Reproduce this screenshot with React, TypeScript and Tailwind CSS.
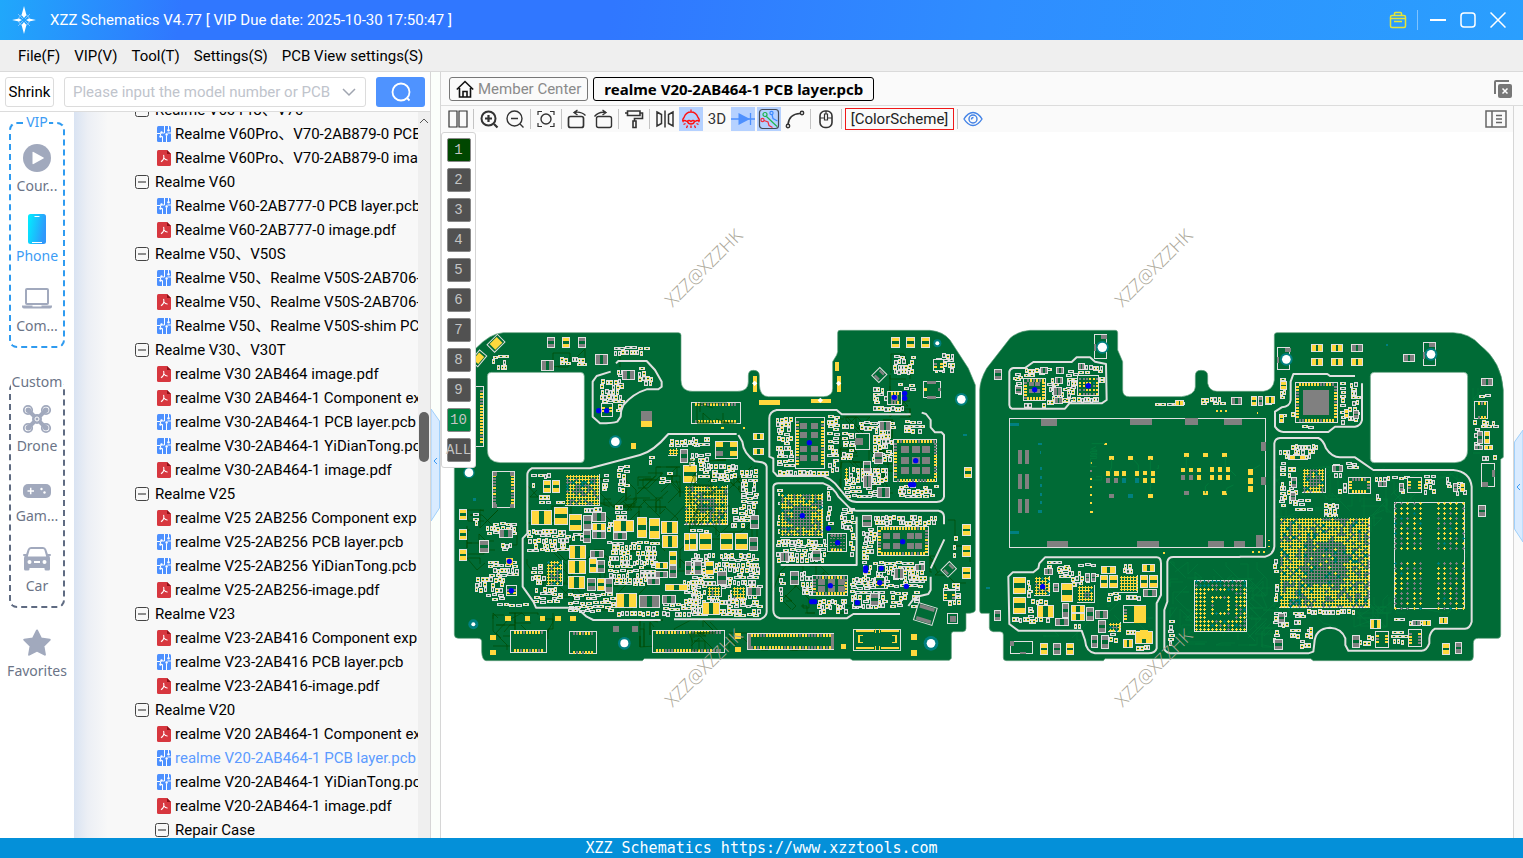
import type { ReactNode } from "react";
import clsx from "clsx";

type Box = [number, number, number, number];
type Part = [number, number, number, number, "h" | "v", "y" | "g"];

const BOARD = "#006b36";
const YELLOW = "#ffd83d";
const GRAY = "#808080";
const TEAL = "#008080";
const SILK = "#e0e0e0";
const DARK = "#004a00";

/* ---------- board drawing ---------- */

const random = (seed: number) => {
  let s = seed * 9301 + 49297;
  return () => {
    s = (s * 1664525 + 1013904223) % 4294967296;
    return s / 4294967296;
  };
};

// the board uses 3 units for one screen pixel, so everything snaps to 3
const snap = (v: number) => Math.round(v / 3) * 3;
const rect = (x: number, y: number, w: number, h: number) =>
  `M${snap(x)} ${snap(y)}h${snap(w)}v${snap(h)}h${-snap(w)}z`;

interface Ink {
  silk: string[];
  board: string[];
  yellow: string[];
  gray: string[];
  teal: string[];
}

const newInk = (): Ink => ({ silk: [], board: [], yellow: [], gray: [], teal: [] });

const drawPart = (ink: Ink, [x, y, w, h, dir, color]: Part) => {
  ink.silk.push(rect(x, y, w, h));
  const iw = snap(w) - 6;
  const ih = snap(h) - 6;
  const sx = snap(x) + 3;
  const sy = snap(y) + 3;
  ink.board.push(rect(sx, sy, iw, ih));
  const list = color === "y" ? ink.yellow : ink.gray;
  if (dir === "h") {
    const p = Math.max(3, snap(iw * 0.36));
    list.push(rect(sx, sy, p, ih), rect(sx + iw - p, sy, p, ih));
  } else {
    const p = Math.max(3, snap(ih * 0.36));
    list.push(rect(sx, sy, iw, p), rect(sx, sy + ih - p, iw, p));
  }
};

const fillArea = (ink: Ink, [x, y, w, h]: Box, seed: number) => {
  const rnd = random(seed);
  let cy = y;
  while (cy + 9 <= y + h + 3) {
    const tall = rnd() > 0.5;
    const rowH = tall ? 15 : 12;
    let cx = x + snap(rnd() * 6);
    while (cx + 9 <= x + w + 3) {
      const pw = tall ? 9 + snap(rnd() * 3) : 15 + snap(rnd() * 4);
      if (rnd() > 0.14) {
        const color = rnd() > 0.35 ? "y" : "g";
        drawPart(ink, [cx, cy + snap(rnd() * 3), pw, rowH - (tall ? 0 : 3), tall ? "v" : "h", color]);
      }
      cx += pw + (rnd() > 0.6 ? 3 : 0);
    }
    cy += rowH;
  }
};

const drawBalls = (ink: Ink, [x, y, w, h]: Box, pitch: number, grayShare: number, seed: number) => {
  const rnd = random(seed);
  const midX = x + w / 2;
  const midY = y + h / 2;
  for (let cy = y + 6; cy < y + h - 3; cy += pitch) {
    for (let cx = x + 6; cx < x + w - 3; cx += pitch) {
      const near = Math.abs(cx - midX) < w * 0.22 && Math.abs(cy - midY) < h * 0.22;
      const r = rnd();
      let list = ink.yellow;
      if (near ? r < grayShare + 0.35 : r < grayShare * 0.6) list = ink.gray;
      else if (r > 0.94) list = ink.teal;
      list.push(rect(cx - 3, cy, 9, 3), rect(cx, cy - 3, 3, 9));
    }
  }
};

// package with pins on its edges: t(op) b(ottom) l(eft) r(ight)
const drawPins = (ink: Ink, [x, y, w, h]: Box, sides: string, seed: number) => {
  const rnd = random(seed);
  ink.silk.push(rect(x, y, w, h));
  ink.board.push(rect(snap(x) + 3, snap(y) + 3, snap(w) - 6, snap(h) - 6));
  const pick = () => (rnd() > 0.3 ? ink.yellow : ink.gray);
  for (let px = x + 12; px < x + w - 12; px += 9) {
    if (sides.includes("t")) pick().push(rect(px, y + 3, 6, 9));
    if (sides.includes("b")) pick().push(rect(px, y + h - 12, 6, 9));
  }
  for (let py = y + 12; py < y + h - 12; py += 9) {
    if (sides.includes("l")) pick().push(rect(x + 3, py, 9, 6));
    if (sides.includes("r")) pick().push(rect(x + w - 12, py, 9, 6));
  }
};

const drawPads = (ink: Ink, [x, y, w, h]: Box, cols: number, rows: number, size: number) => {
  for (let r = 0; r < rows; r++) {
    for (let c = 0; c < cols; c++) {
      const px = x + (w * (c + 0.5)) / cols - size / 2;
      const py = y + (h * (r + 0.5)) / rows - size / 2;
      ink.gray.push(rect(px, py, size, size - 3));
    }
  }
};

const wander = ([x, y, w, h]: Box, count: number, seed: number) => {
  const rnd = random(seed);
  const out: string[] = [];
  for (let i = 0; i < count; i++) {
    let cx = x + rnd() * w;
    let cy = y + rnd() * h;
    let d = `M${snap(cx)} ${snap(cy)}`;
    for (let k = 0; k < 4; k++) {
      const step = 12 + rnd() * 45;
      const turn = Math.floor(rnd() * 3);
      const dx = (rnd() > 0.5 ? 1 : -1) * (turn === 1 ? 0 : step);
      const dy = (rnd() > 0.5 ? 1 : -1) * (turn === 0 ? 0 : step);
      cx = Math.min(x + w, Math.max(x, cx + dx));
      cy = Math.min(y + h, Math.max(y, cy + dy));
      d += `L${snap(cx)} ${snap(cy)}`;
    }
    out.push(d);
  }
  return out.join("");
};

const InkLayer = ({ ink }: { ink: Ink }) => (
  <g shapeRendering="crispEdges">
    <path d={ink.silk.join("")} fill={SILK} />
    <path d={ink.board.join("")} fill={BOARD} />
    <path d={ink.yellow.join("")} fill={YELLOW} />
    <path d={ink.gray.join("")} fill={GRAY} />
    <path d={ink.teal.join("")} fill={TEAL} />
  </g>
);

interface Section {
  offset: number;
  areas: Box[];
  parts: Part[];
  balls: [Box, number, number][];
  pins: [Box, string][];
  pads: [Box, number, number, number][];
  yellow: Box[];
  gray: Box[];
  teal: Box[];
  silk: string;
  blue: [number, number][];
  holes: [number, number, number, number][];
  traces: [Box, number][];
  traceColor: string;
}

const sections: Section[] = [
  {
    offset: 0,
    areas: [
      [275, 105, 42, 36], [480, 110, 80, 26], [636, 78, 104, 30], [600, 176, 66, 74], [650, 148, 24, 50],
      [712, 140, 45, 60], [642, 250, 20, 30], [392, 462, 36, 40], [430, 460, 50, 15], [414, 526, 40, 30],
      [462, 542, 90, 16], [550, 562, 60, 12], [220, 580, 16, 60], [255, 605, 100, 40], [300, 670, 40, 22],
      [265, 720, 90, 46], [222, 770, 90, 50], [255, 820, 60, 24], [290, 848, 85, 16], [380, 626, 120, 70],
      [390, 730, 42, 60], [400, 800, 90, 54], [516, 636, 34, 34], [620, 664, 150, 104], [640, 770, 100, 26],
      [500, 820, 148, 60], [652, 874, 130, 12], [606, 462, 16, 45], [650, 436, 30, 80], [644, 556, 30, 44],
      [776, 456, 36, 30], [806, 356, 90, 30], [868, 396, 30, 40], [786, 850, 110, 36], [848, 780, 50, 64],
      [740, 406, 20, 24], [620, 606, 20, 24],
    ],
    parts: [
      [441, 52, 24, 34, "v", "g"], [487, 52, 24, 34, "v", "y"], [533, 52, 24, 34, "v", "g"],
      [424, 120, 38, 32, "h", "g"], [585, 102, 38, 32, "h", "g"], [667, 150, 40, 30, "h", "g"],
      [178, 568, 24, 34, "v", "y"], [178, 628, 24, 34, "v", "y"], [178, 688, 24, 36, "v", "y"],
      [236, 660, 30, 38, "v", "g"], [430, 480, 24, 40, "v", "y"], [455, 480, 24, 40, "v", "y"],
      [394, 570, 64, 44, "h", "y"], [462, 560, 42, 54, "v", "y"], [506, 582, 39, 51, "v", "y"],
      [548, 585, 26, 44, "v", "g"], [575, 576, 42, 30, "h", "g"], [575, 608, 42, 24, "h", "y"],
      [640, 600, 62, 36, "h", "y"], [710, 590, 30, 64, "v", "y"], [746, 594, 33, 64, "v", "y"],
      [782, 602, 51, 40, "h", "y"], [785, 646, 48, 38, "h", "y"], [506, 676, 52, 42, "h", "y"],
      [504, 720, 54, 42, "h", "y"], [504, 768, 52, 38, "h", "y"], [560, 774, 26, 40, "v", "g"],
      [590, 774, 24, 40, "v", "y"], [616, 774, 24, 44, "v", "g"], [648, 820, 64, 44, "h", "y"],
      [718, 824, 62, 38, "h", "g"], [785, 824, 42, 26, "h", "g"], [853, 638, 42, 54, "v", "y"],
      [848, 434, 42, 54, "v", "y"], [855, 722, 22, 42, "v", "g"], [880, 722, 22, 42, "v", "g"],
      [570, 690, 42, 24, "h", "g"], [568, 715, 24, 44, "v", "y"], [592, 720, 24, 38, "v", "g"],
      [740, 775, 38, 22, "h", "g"], [765, 725, 40, 22, "h", "y"], [766, 752, 40, 20, "h", "g"],
      [795, 793, 70, 20, "h", "y"], [808, 692, 24, 42, "v", "y"], [808, 736, 24, 40, "v", "g"],
      [296, 628, 42, 26, "h", "g"], [840, 388, 24, 42, "v", "g"], [640, 637, 42, 24, "h", "g"],
      [575, 634, 42, 24, "h", "g"], [550, 630, 24, 40, "v", "g"],
    ],
    balls: [
      [[496, 462, 104, 95], 9, 0.3],
      [[438, 720, 50, 78], 9, 0.3],
      [[852, 495, 133, 120], 9, 0.35],
      [[804, 384, 28, 24], 9, 0.2],
    ],
    pins: [
      [[276, 454, 68, 112], "lr"], [[331, 930, 112, 68], "tb"], [[508, 934, 84, 70], "tb"],
      [[757, 930, 220, 68], "tb"], [[873, 247, 150, 66], "tb"], [[224, 198, 28, 182], "r"],
      [[602, 250, 36, 42], "lr"], [[318, 796, 34, 34], "lr"],
    ],
    pads: [[[722, 277, 36, 22], 1, 1, 33]],
    yellow: [
      [724, 293, 33, 26], [693, 369, 15, 18], [315, 888, 18, 15], [375, 888, 15, 15], [420, 888, 15, 15],
      [466, 888, 18, 15], [510, 888, 18, 15], [270, 945, 18, 15], [270, 990, 18, 15], [318, 714, 21, 21],
    ],
    gray: [[639, 918, 18, 18], [697, 918, 18, 18], [278, 456, 12, 12], [330, 456, 12, 12], [278, 552, 12, 12], [330, 552, 12, 12]],
    teal: [[218, 535, 9, 9]],
    silk:
      "M648 130L655 123H740L765 150L785 185V200L775 208H740Q700 220 670 255Q662 270 662 290L652 305Q640 310 600 310L578 290V185L590 168L632 155" +
      "M1010 342H805Q760 395 720 405L570 445H395Q382 452 382 465V640L368 655V800L400 845L408 863H530L560 890L580 900H782" +
      "M822 898H1080Q1100 890 1100 875V440Q1098 428 1080 426L1065 424Q1030 400 1027 365L1015 345",
    blue: [[596, 272], [620, 272], [328, 724], [334, 812]],
    holes: [[646, 365, 13, 19], [207, 458, 13, 17], [673, 970, 12, 19], [220, 913, 6, 15]],
    traces: [[[600, 440, 240, 120], 18], [[380, 470, 500, 400], 40], [[280, 880, 180, 110], 10], [[720, 900, 250, 80], 10], [[200, 570, 150, 180], 8], [[460, 60, 200, 80], 3]],
    traceColor: DARK,
  },
  {
    offset: 870,
    areas: [
      [258, 290, 50, 150], [408, 286, 36, 170], [452, 310, 40, 110], [490, 304, 60, 26], [545, 304, 62, 120],
      [462, 440, 130, 92], [622, 496, 118, 36], [258, 656, 150, 62], [408, 500, 20, 110], [450, 560, 40, 60],
      [476, 620, 15, 90], [260, 505, 10, 140], [516, 586, 230, 28], [512, 620, 44, 92], [515, 722, 190, 86],
      [382, 836, 90, 40], [266, 760, 14, 84], [480, 770, 110, 90], [545, 200, 44, 60], [610, 106, 60, 48],
      [735, 98, 60, 60], [620, 188, 50, 22], [150, 446, 52, 128], [0, 352, 66, 24], [20, 400, 36, 80],
      [60, 432, 82, 50], [122, 560, 50, 60], [0, 700, 210, 186], [576, 258, 80, 10], [596, 812, 90, 54],
      [760, 790, 50, 66], [640, 300, 62, 44], [262, 450, 172, 9], [330, 752, 40, 74], [200, 296, 22, 12],
      [790, 646, 10, 70], [0, 628, 70, 9],
    ],
    parts: [
      [603, 52, 26, 34, "v", "y"], [648, 52, 26, 34, "v", "y"], [694, 52, 26, 34, "v", "y"],
      [189, 340, 34, 22, "h", "y"], [189, 385, 34, 22, "h", "y"], [822, 442, 24, 34, "v", "y"],
      [816, 612, 26, 36, "v", "y"], [816, 676, 26, 36, "v", "y"], [816, 740, 26, 36, "v", "y"],
      [300, 752, 26, 42, "v", "g"], [-2, 640, 24, 50, "v", "y"], [26, 640, 38, 52, "v", "y"],
      [90, 640, 38, 52, "v", "y"], [134, 640, 38, 52, "v", "y"], [178, 652, 26, 42, "v", "g"],
      [180, 585, 26, 42, "v", "g"], [45, 724, 26, 42, "v", "y"], [12, 724, 24, 42, "v", "g"],
      [82, 752, 30, 42, "v", "g"], [172, 802, 42, 26, "h", "g"], [36, 846, 54, 40, "h", "y"],
      [540, 820, 28, 40, "v", "g"], [566, 304, 36, 30, "h", "g"], [518, 424, 24, 34, "v", "g"],
      [552, 396, 28, 36, "v", "g"], [520, 466, 28, 38, "h", "g"], [562, 500, 40, 32, "h", "g"],
      [612, 744, 30, 32, "h", "g"], [270, 696, 28, 30, "h", "g"], [366, 690, 28, 32, "v", "g"],
      [516, 586, 30, 36, "v", "g"], [676, 732, 30, 22, "h", "g"],
    ],
    balls: [
      [[270, 518, 130, 134], 9, 0.6], [[52, 797, 45, 34], 9, 0.1], [[125, 797, 45, 40], 9, 0.1],
      [[462, 440, 18, 40], 9, 0.1],
    ],
    pins: [
      [[314, 290, 90, 155], "lr"], [[610, 358, 133, 130], "tblr"], [[560, 618, 156, 90], "tblr"],
      [[367, 765, 108, 62], "tblr"], [[592, 212, 44, 42], "tb"], [[412, 638, 60, 58], "tb"],
      [[172, 940, 262, 50], "tb"], [[490, 926, 144, 66], ""], [[700, 184, 54, 52], ""],
      [[772, 880, 34, 34], ""], [[728, 118, 33, 36], "lr"], [[758, 810, 40, 34], "lr"],
      [[554, 770, 30, 36], "lr"], [[562, 734, 26, 24], "lr"], [[490, 836, 26, 24], "lr"],
      [[495, 340, 44, 50], ""], [[76, 363, 68, 54], ""],
    ],
    pads: [
      [[322, 304, 68, 56], 2, 2, 21], [[322, 376, 68, 54], 2, 2, 21], [[630, 376, 94, 92], 3, 3, 24],
      [[576, 634, 56, 60], 2, 2, 21], [[648, 634, 50, 60], 2, 2, 21], [[378, 776, 90, 42], 3, 2, 21],
      [[602, 222, 24, 24], 1, 1, 21], [[496, 352, 24, 30], 1, 1, 24],
      [[418, 644, 50, 48], 5, 5, 6],
    ],
    yellow: [
      [190, 168, 12, 48], [207, 240, 63, 15], [363, 237, 60, 12], [441, 168, 12, 48], [435, 126, 12, 27],
      [135, 939, 18, 18], [135, 981, 18, 15], [663, 942, 18, 18], [663, 990, 18, 18], [453, 972, 15, 15],
      [498, 930, 55, 6], [573, 930, 55, 6], [498, 981, 55, 6], [573, 981, 55, 6], [504, 945, 6, 24],
      [614, 945, 6, 24], [701, 204, 9, 9], [94, 320, 9, 6], [160, 320, 6, 6], [504, 945, 15, 3],
      [504, 966, 15, 3], [606, 945, 15, 3], [606, 966, 15, 3], [555, 927, 3, 12], [567, 927, 3, 12],
      [555, 978, 3, 12], [567, 978, 3, 12], [79, 366, 21, 15], [120, 366, 21, 15], [120, 393, 21, 15],
    ],
    gray: [
      [712, 184, 28, 9], [712, 227, 28, 9], [744, 205, 9, 9], [780, 888, 18, 18], [174, 942, 9, 45],
      [423, 942, 9, 45], [79, 393, 21, 15],
    ],
    teal: [[819, 343, 12, 5], [888, 802, 12, 6]],
    silk:
      "M662 283H455L440 270H260Q238 275 238 295V410L250 415V455L262 468H400Q420 475 435 490L475 538Q485 546 500 546H740Q760 545 762 530V345L755 337H735L722 322V300L708 282L695 278" +
      "M500 590V735H272M630 882H490L470 895H270Q250 890 250 870V500Q252 490 265 490H400Q430 500 445 530L480 565Q490 572 500 572H745Q762 575 762 590V613" +
      "M763 658L722 745M722 770V810L715 822L690 828L672 835L655 858",
    blue: [
      [358, 368], [677, 422], [337, 587], [415, 625], [443, 668], [638, 665], [613, 232], [644, 220], [644, 235],
      [662, 494], [671, 494], [574, 745], [527, 744], [527, 752], [569, 788], [649, 799], [421, 797], [365, 845], [374, 845], [502, 848],
    ],
    holes: [[742, 70, 6, 12], [814, 238, 13, 19], [723, 970, 13, 22]],
    traces: [[[0, 420, 200, 240], 24], [[250, 640, 240, 240], 12], [[450, 290, 160, 230], 24], [[0, 940, 400, 50], 10], [[20, 250, 120, 60], 6], [[600, 90, 60, 200], 5], [[720, 600, 120, 200], 5]],
    traceColor: DARK,
  },
  {
    offset: 1710,
    areas: [
      [130, 156, 26, 18], [162, 144, 44, 24], [208, 144, 40, 22], [232, 172, 26, 76], [255, 204, 50, 44],
      [288, 148, 30, 80], [322, 136, 76, 24], [388, 168, 10, 60], [262, 232, 128, 9], [160, 246, 70, 9],
      [540, 246, 110, 9], [690, 230, 70, 24], [228, 724, 74, 18], [262, 738, 42, 44], [300, 752, 36, 36],
      [322, 728, 56, 12], [455, 730, 50, 22], [344, 760, 30, 28], [172, 776, 12, 60], [178, 838, 54, 16],
      [170, 858, 26, 44], [126, 892, 112, 20], [412, 816, 28, 30], [440, 826, 74, 12], [456, 926, 40, 20],
      [418, 940, 26, 36], [494, 974, 50, 12], [594, 862, 9, 110], [132, 172, 20, 45], [312, 908, 18, 9],
    ],
    parts: [
      [73, 148, 25, 34, "v", "g"], [128, 772, 40, 52, "v", "y"], [128, 830, 40, 52, "v", "y"],
      [274, 790, 36, 56, "v", "y"], [202, 856, 50, 40, "h", "y"], [392, 738, 44, 24, "h", "y"],
      [390, 766, 24, 40, "v", "y"], [416, 766, 28, 40, "v", "y"], [516, 733, 40, 25, "h", "y"],
      [510, 764, 24, 40, "v", "y"], [537, 764, 26, 40, "v", "y"], [518, 808, 42, 24, "h", "g"],
      [277, 848, 22, 46, "v", "g"], [303, 855, 42, 24, "h", "y"], [303, 880, 42, 25, "h", "y"],
      [348, 862, 24, 42, "v", "g"], [376, 870, 40, 26, "h", "g"], [384, 900, 25, 40, "v", "g"],
      [364, 946, 22, 40, "v", "g"], [392, 946, 25, 42, "v", "g"], [256, 893, 42, 24, "h", "g"],
      [496, 932, 54, 40, "h", "y"], [460, 958, 30, 28, "h", "y"], [210, 968, 25, 36, "v", "y"],
      [249, 968, 25, 36, "v", "g"], [289, 968, 25, 36, "v", "y"], [73, 870, 22, 34, "v", "g"],
      [782, 230, 34, 24, "h", "g"], [843, 228, 17, 30, "v", "y"], [863, 228, 15, 30, "v", "g"],
      [886, 228, 22, 28, "v", "y"], [616, 240, 26, 18, "h", "y"], [134, 198, 20, 24, "v", "g"],
      [210, 142, 25, 22, "h", "g"], [259, 140, 25, 22, "h", "g"], [325, 130, 22, 22, "h", "g"],
      [255, 170, 25, 22, "h", "g"], [250, 200, 26, 26, "h", "g"], [252, 232, 26, 20, "h", "g"],
      [250, 788, 18, 26, "v", "g"], [222, 744, 26, 20, "h", "g"], [346, 758, 16, 28, "v", "g"],
      [364, 758, 14, 28, "v", "g"],
    ],
    balls: [
      [[320, 795, 54, 54], 9, 0], [[447, 766, 58, 54], 9, 0], [[415, 905, 38, 30], 9, 0.1], [[193, 768, 47, 60], 9, 0.2],
    ],
    pins: [
      [[118, 295, 772, 390], ""], [[158, 174, 70, 70], "tblr"], [[322, 165, 66, 62], ""], [[460, 856, 70, 55], "l"],
      [[373, 42, 40, 74], ""], [[120, 964, 70, 40], ""], [[673, 780, 160, 155], ""],
    ],
    pads: [[[174, 184, 38, 42], 2, 2, 15]],
    yellow: [
      [491, 858, 36, 51], [511, 930, 24, 27], [402, 369, 9, 6], [417, 408, 15, 12], [474, 408, 15, 12], [534, 408, 15, 12],
      [408, 453, 12, 15], [432, 453, 15, 15], [456, 453, 12, 15], [495, 453, 12, 15], [519, 453, 12, 12],
      [543, 453, 12, 15], [519, 474, 12, 15], [543, 474, 12, 15], [534, 522, 15, 12], [642, 399, 15, 12],
      [699, 399, 15, 12], [756, 399, 15, 12], [633, 444, 12, 12], [657, 444, 12, 12], [681, 444, 12, 12],
      [720, 441, 12, 15], [744, 441, 12, 15], [768, 441, 12, 15], [681, 465, 12, 15], [720, 465, 12, 15],
      [744, 465, 12, 15], [768, 465, 12, 15], [699, 513, 15, 12], [756, 513, 15, 12], [834, 447, 15, 18],
      [834, 474, 15, 18], [834, 498, 15, 18], [360, 426, 6, 6], [360, 474, 6, 6], [360, 498, 6, 6], [360, 522, 6, 6],
      [360, 546, 6, 6], [360, 573, 9, 6], [738, 270, 6, 6], [750, 270, 6, 6], [765, 270, 6, 6], [861, 276, 3, 6],
      [846, 693, 6, 6], [864, 693, 6, 6], [879, 693, 6, 6], [579, 696, 6, 6], [894, 660, 6, 3], [894, 678, 6, 3],
    ],
    gray: [
      [213, 297, 48, 21], [480, 297, 66, 18], [645, 294, 39, 21], [762, 297, 54, 18], [231, 663, 63, 18],
      [501, 663, 66, 18], [714, 663, 48, 18], [792, 663, 33, 18], [858, 645, 21, 36], [873, 366, 15, 27],
      [873, 471, 15, 24], [144, 390, 12, 42], [165, 390, 12, 42], [144, 462, 12, 45], [165, 462, 12, 45],
      [144, 537, 12, 42], [165, 537, 12, 42], [408, 474, 12, 15], [432, 474, 12, 15], [417, 522, 15, 12],
      [633, 465, 12, 15], [657, 465, 12, 15], [642, 513, 15, 12], [360, 450, 6, 6], [393, 45, 18, 12],
      [372, 72, 6, 21], [120, 963, 12, 15], [150, 996, 18, 6],
    ],
    teal: [
      [120, 309, 27, 9], [120, 633, 27, 9], [204, 369, 12, 6], [210, 393, 3, 9], [210, 441, 6, 9], [210, 468, 6, 9],
      [210, 492, 6, 9], [210, 519, 6, 9], [210, 543, 6, 9], [204, 570, 12, 9], [456, 474, 12, 15], [495, 474, 12, 15], [474, 522, 15, 12],
    ],
    silk:
      "M118 155Q120 146 130 144H165L190 126H305L320 112H360L375 125L408 132L410 240L395 250H298L285 266H125Q118 262 118 255Z" +
      "M115 770L128 757H190L205 745L208 730L225 712H560Q573 712 573 730V825L560 850V985Q555 1000 535 1000H375Q348 995 345 960L335 932H145L118 912Z",
    blue: [[194, 209], [355, 197], [218, 800]],
    holes: [[397, 82, 14, 19]],
    traces: [[[600, 725, 290, 250], 30], [[220, 720, 330, 240], 14]],
    traceColor: "#007a3c",
  },
  {
    offset: 2520,
    areas: [
      [118, 372, 116, 44], [118, 422, 20, 160], [140, 440, 28, 110], [160, 536, 52, 40], [246, 548, 48, 36],
      [276, 430, 30, 44], [318, 426, 40, 24], [290, 490, 28, 26], [296, 186, 24, 118], [330, 186, 24, 60],
      [322, 260, 30, 44], [100, 874, 14, 100], [112, 876, 30, 44], [146, 926, 66, 18], [160, 872, 28, 30],
      [196, 868, 154, 18], [176, 956, 34, 22], [336, 944, 68, 32], [456, 892, 42, 15], [452, 934, 44, 44],
      [506, 900, 56, 15], [550, 466, 40, 50], [616, 468, 16, 50], [644, 486, 30, 30], [696, 222, 72, 12],
      [698, 300, 70, 22], [698, 324, 18, 50], [724, 404, 44, 9], [120, 174, 20, 66], [116, 280, 20, 24],
      [150, 276, 10, 28], [386, 584, 22, 15], [98, 716, 14, 40], [102, 790, 12, 50], [180, 316, 62, 9],
      [402, 468, 54, 9], [456, 468, 44, 12], [402, 520, 20, 24], [476, 488, 20, 26],
    ],
    parts: [
      [214, 72, 36, 24, "h", "y"], [274, 72, 36, 24, "h", "y"], [333, 72, 36, 24, "h", "g"],
      [214, 114, 36, 24, "h", "y"], [274, 114, 36, 24, "h", "y"], [333, 114, 36, 24, "h", "y"],
      [489, 102, 36, 24, "h", "g"], [723, 174, 36, 24, "h", "g"], [714, 556, 24, 36, "v", "g"],
      [607, 970, 25, 36, "v", "y"], [646, 967, 22, 36, "v", "g"], [390, 896, 34, 30, "h", "y"],
      [33, 228, 18, 30, "v", "y"], [54, 228, 14, 30, "v", "g"], [76, 228, 30, 24, "h", "y"],
      [120, 182, 20, 28, "v", "y"], [118, 283, 16, 26, "v", "y"], [414, 482, 26, 18, "h", "g"],
      [114, 880, 22, 30, "v", "g"], [102, 958, 26, 34, "v", "g"], [336, 944, 24, 38, "v", "g"],
      [516, 900, 26, 18, "h", "g"], [546, 900, 26, 18, "h", "y"], [596, 890, 28, 20, "h", "y"],
      [712, 334, 18, 40, "v", "g"], [733, 334, 18, 40, "v", "y"], [702, 374, 26, 16, "h", "g"],
      [733, 374, 26, 16, "h", "y"], [148, 404, 52, 16, "h", "y"], [206, 922, 12, 22, "v", "y"],
      [152, 470, 18, 34, "v", "g"], [150, 516, 18, 26, "v", "g"], [276, 436, 34, 20, "h", "g"],
      [640, 488, 16, 26, "v", "g"], [660, 488, 16, 26, "v", "y"], [478, 488, 16, 26, "v", "g"],
      [338, 270, 18, 26, "v", "g"], [312, 266, 14, 26, "v", "y"],
    ],
    balls: [[[116, 590, 272, 272], 9, 0.5], [[186, 443, 72, 75], 9, 0.5]],
    pins: [
      [[165, 187, 128, 123], "tblr"], [[324, 470, 68, 51], "tblr"], [[500, 472, 46, 48], "lr"],
      [[406, 932, 42, 50], "lr"], [[505, 928, 42, 55], "lr"], [[703, 244, 43, 55], "tb"],
      [[112, 82, 40, 70], ""], [[550, 67, 40, 72], ""], [[724, 430, 43, 72], ""], [[463, 547, 212, 321], ""],
    ],
    pads: [],
    yellow: [],
    gray: [
      [189, 210, 78, 75], [134, 84, 18, 12], [112, 112, 6, 18], [568, 68, 18, 12], [550, 96, 6, 20],
      [755, 450, 9, 21], [726, 486, 12, 15], [735, 486, 9, 15],
    ],
    teal: [[437, 73, 6, 6]],
    silk:
      "M0 710H75Q100 705 103 680V370Q105 355 120 354H235Q250 360 258 385Q275 412 300 412H345L400 450H640Q690 455 695 500V905Q690 925 675 926H585Q570 935 568 955V970Q560 992 545 992H325L316 975V955Q305 925 270 923Q225 925 223 970L220 995L205 1000H-210Q-227 995 -227 985V870L-218 845V725Q-215 711 -200 711H0Z" +
      "M345 168H270L262 162H160L152 185V240Q150 260 125 262L105 275V320Q115 335 130 336H265L285 320H345Q362 318 366 300V190",
    blue: [],
    holes: [[139, 118, 13, 19], [573, 103, 13, 19]],
    traces: [[[100, 440, 340, 150], 30], [[380, 460, 300, 420], 34], [[0, 720, 110, 260], 16], [[110, 860, 330, 60], 16], [[700, 180, 60, 220], 4]],
    traceColor: "#007a3c",
  },
];

// memory footprints with an open pitch
const memoryBalls = () => {
  const ink = newInk();
  const rnd = random(77);
  const pick = () => {
    const r = rnd();
    return r < 0.62 ? ink.yellow : r < 0.93 ? ink.gray : ink.teal;
  };
  const cols = [465, 483, 501, 522, 540, 594, 612, 630, 648, 669];
  for (const c of cols) {
    for (let y = 549; y < 866; y += 15) {
      if (y > 690 && y < 720) continue;
      const list = pick();
      list.push(rect(2520 + c - 3, y, 9, 3), rect(2520 + c, y - 3, 3, 9));
    }
  }
  for (let r = 0; r < 13; r++) {
    for (let c = 0; c < 13; c++) {
      const ring = Math.min(r, c, 12 - r, 12 - c);
      if (ring === 3 || (ring > 4 && !(r === 5 && c > 8))) continue;
      const list = r < 2 ? (rnd() > 0.5 ? ink.teal : ink.gray) : c < 4 ? ink.yellow : pick();
      list.push(rect(2385 + c * 12, 783 + r * 12, 9, 3), rect(2388 + c * 12, 780 + r * 12, 3, 9));
    }
  }
  for (let r = 0; r < 5; r++) {
    for (let c = 0; c < 6; c++) {
      const list = pick();
      list.push(rect(2038 + c * 10, 174 + r * 11, 6, 6));
    }
  }
  return ink;
};

const BoardSection = ({ section, index }: { section: Section; index: number }) => {
  const small = newInk();
  const large = newInk();
  section.areas.forEach((area, i) => fillArea(small, area, index * 100 + i + 3));
  section.pins.forEach(([box, sides], i) => drawPins(large, box, sides, index * 50 + i + 11));
  section.balls.forEach(([box, pitch, share], i) => {
    const [x, y, w, h] = box;
    large.silk.push(rect(x, y, w, h));
    large.board.push(rect(x, y, w - 3, h - 3));
    drawBalls(large, box, pitch, share, index * 30 + i + 5);
  });
  section.parts.forEach((part) => drawPart(large, part));
  section.pads.forEach(([box, cols, rows, size]) => drawPads(large, box, cols, rows, size));
  section.yellow.forEach((b) => large.yellow.push(rect(...b)));
  section.gray.forEach((b) => large.gray.push(rect(...b)));
  section.teal.forEach((b) => large.teal.push(rect(...b)));
  return (
    <g transform={`translate(${section.offset} 0)`}>
      <path
        d={section.traces.map(([box, count], i) => wander(box, count, index * 10 + i + 1)).join("")}
        fill="none"
        stroke={section.traceColor}
        strokeWidth="2"
      />
      <InkLayer ink={small} />
      <InkLayer ink={large} />
      <path d={section.silk} fill="none" stroke={SILK} strokeWidth="6" strokeLinejoin="round" />
      {section.holes.map(([x, y, r, ring]) => (
        <g key={`${x}-${y}`}>
          <circle cx={x} cy={y} r={ring} fill={TEAL} />
          <circle cx={x} cy={y} r={r} fill="#fff" />
        </g>
      ))}
      {section.blue.map(([x, y]) => (
        <circle key={`${x}-${y}`} cx={x} cy={y} r="8" fill="#0000f0" />
      ))}
    </g>
  );
};

const LEFT_BOARD =
  "M310 38H835Q843 38 843 46V180Q843 214 877 214H1012Q1045 214 1045 185V167Q1045 151 1060 151Q1078 151 1078 167V195Q1080 230 1105 230H1270Q1298 230 1298 205V125L1310 105L1313 95V38Q1313 31 1320 31H1590Q1630 35 1650 60L1705 145L1726 195V870Q1726 880 1698 880V925Q1698 935 1688 935H1660Q1654 935 1654 943V1015L1648 1021H1358L1350 1016H733L727 1022H258Q246 1020 245 995V965Q245 955 232 955H175Q163 955 163 943V190Q190 110 228 85Q270 40 310 38Z" +
  "M274 157V157H541Q553 157 553 169V416Q553 428 541 428H300Q262 426 262 390V169Q262 157 274 157Z";
const RIGHT_BOARD =
  "M1890 31H2146Q2153 31 2153 38V90L2168 125V210Q2168 230 2188 230H2345Q2385 225 2386 200V167Q2386 151 2403 151Q2423 151 2423 167V190Q2428 214 2451 214H2590Q2620 210 2623 180V46Q2623 38 2631 38H3160Q3210 40 3240 75Q3305 125 3310 210V412L3302 418V945Q3302 955 3292 955H3235Q3220 955 3220 970V1010Q3220 1022 3208 1022H2740L2732 1016H2115L2110 1022H1820Q1810 1022 1810 1014V945Q1810 935 1800 935H1780Q1768 933 1768 923V880H1745Q1739 880 1739 870V210Q1740 180 1760 145L1830 55Q1850 35 1890 31Z" +
  "M2923 157H3191Q3203 157 3203 169V390Q3203 426 3165 428H2923Q2911 428 2911 416V169Q2911 157 2923 157Z";

// tracks that run between the contacts under the shield
const SHIELD_TRACES =
  "M2075 371H2115M2088 380L2072 388M2135 418V440L2130 455M2200 418L2215 435V453M2251 418V522M2275 435V445H2270M2075 390H2090V395H2072V400H2090V405H2072V410H2090V415H2072V440H2090M2088 470H2105V480H2080M2359 410V445M2476 410V450M2490 450L2508 468M2416 520V500L2425 490M2480 520V505L2500 495M2560 447L2580 435";

const tiltedParts: [number, number, number, number, number, string][] = [
  [288, 70, 32, 44, 45, YELLOW],
  [236, 115, 28, 42, 40, YELLOW],
  [1438, 165, 30, 34, 45, GRAY],
  [1646, 748, 30, 36, 45, GRAY],
  [1576, 882, 58, 54, 17, GRAY],
];

const edgeStars: [number, number][] = [[1064, 190], [1261, 241], [1316, 190]];

const watermarks: [number, number][] = [[704, 268], [1154, 268], [704, 668], [1154, 668]];

const BoardView = () => (
  <svg
    viewBox="441 132 1072 706"
    preserveAspectRatio="xMinYMin meet"
    className="block h-full w-full"
    role="img"
    aria-label="PCB layer"
  >
    <g transform="translate(400 320) scale(0.3333333)">
      <path d={LEFT_BOARD} fill={BOARD} fillRule="evenodd" stroke="#5f9f7c" strokeWidth="2" />
      <path d={RIGHT_BOARD} fill={BOARD} fillRule="evenodd" stroke="#5f9f7c" strokeWidth="2" />
      {sections.map((section, i) => (
        <BoardSection key={section.offset} section={section} index={i} />
      ))}
      <InkLayer ink={memoryBalls()} />
      <path d={SHIELD_TRACES} fill="none" stroke="#007a3c" strokeWidth="3" />
      {tiltedParts.map(([x, y, w, h, angle, color]) => (
        <g key={x} transform={`translate(${x} ${y}) rotate(${angle})`}>
          <rect x={-w / 2} y={-h / 2} width={w} height={h} fill={BOARD} stroke={SILK} strokeWidth="3" />
          {color === YELLOW ? (
            <rect x={-w / 2 + 4} y={-h / 2 + 7} width={w - 8} height={h - 14} fill={color} />
          ) : (
            <>
              <rect x={-w / 2 + 6} y={-h / 2 + 3} width={w - 12} height={h / 5} fill={color} />
              <rect x={-w / 2 + 6} y={h / 2 - 3 - h / 5} width={w - 12} height={h / 5} fill={color} />
            </>
          )}
        </g>
      ))}
      {edgeStars.map(([x, y]) => (
        <path key={x} d={`M${x - 8} ${y}L${x} ${y - 8}L${x + 8} ${y}L${x} ${y + 8}Z`} fill="#fff" />
      ))}
      <circle cx="2065" cy="197" r="8" fill="#0000f0" />
    </g>
    {watermarks.map(([x, y]) => (
      <text
        key={`${x}-${y}`}
        x={x}
        y={y + 6}
        transform={`rotate(-45 ${x} ${y})`}
        textAnchor="middle"
        fontFamily='"Open Sans", sans-serif'
        fontSize="18"
        fontWeight="300"
        fill="#a9a596"
      >
        XZZ@XZZHK
      </text>
    ))}
  </svg>
);

/* ---------- icons ---------- */

const Icon = ({ size = 20, children }: { size?: number; children: ReactNode }) => (
  <svg
    width={size}
    height={size}
    viewBox="0 0 20 20"
    fill="none"
    stroke="currentColor"
    strokeWidth="1.4"
    aria-hidden="true"
    className="shrink-0"
  >
    {children}
  </svg>
);

const LogoIcon = () => (
  <svg width="24" height="28" viewBox="0 0 24 28" aria-hidden="true">
    <path d="M6 8L11 13M18 8L13 13M6 20L11 15M18 20L13 15" stroke="#7cc4ff" strokeWidth="1" />
    <circle cx="12" cy="14" r="5.500" fill="none" stroke="#8ecbff" strokeWidth="1" />
    <path d="M12 0L14.400 9L12 12L9.600 9ZM12 28L14.400 19L12 16L9.600 19ZM0 14L7 12.400L10 14L7 15.600ZM24 14L17 12.400L14 14L17 15.600Z" fill="#fff" />
  </svg>
);

const PdfIcon = () => (
  <svg width="14" height="16" viewBox="0 0 14 16" aria-hidden="true" className="shrink-0">
    <path d="M1.500 0H10L14 4V14.500Q14 16 12.500 16H1.500Q0 16 0 14.500V1.500Q0 0 1.500 0Z" fill="#d7373f" />
    <path d="M10 0L14 4H10Z" fill="#8f1118" />
    <path d="M6.600 4.800Q7.400 7.500 6.400 9.300Q5.500 11.200 3.900 11.600M6.900 8Q8.500 10.200 10.600 10" fill="none" stroke="#fff" strokeWidth="1.100" />
  </svg>
);

const PcbIcon = () => (
  <svg width="14" height="16" viewBox="0 0 14 16" aria-hidden="true" className="shrink-0">
    <rect width="14" height="16" rx="1.500" fill="#4d90fe" />
    <path d="M7.500 0V7H5.500M0 7.500H3.500V9.500M5.500 16V10.500H3.500M9.500 16V9.500M11.500 0V3.500M14 7H10.500" fill="none" stroke="#fff" strokeWidth="1" />
    <circle cx="4.500" cy="6.500" r="1.200" fill="#fff" />
    <circle cx="3.500" cy="10.500" r="1.200" fill="#fff" />
    <circle cx="11.500" cy="4.300" r="1.200" fill="#fff" />
    <circle cx="9.600" cy="8.500" r="1.200" fill="#fff" />
  </svg>
);

const CollapseIcon = () => (
  <svg width="14" height="14" viewBox="0 0 14 14" aria-hidden="true" className="shrink-0">
    <rect x="0.500" y="0.500" width="13" height="13" rx="2" fill="none" stroke="#444" />
    <path d="M3 7H11" stroke="#222" />
  </svg>
);

const CourseIcon = () => (
  <svg width="28" height="28" viewBox="0 0 28 28" aria-hidden="true">
    <circle cx="14" cy="14" r="14" fill="#a1a9bd" />
    <path d="M9.500 8.500Q9.500 7.500 10.500 8L20.500 13.500Q21.300 14 20.500 14.500L10.500 20Q9.500 20.500 9.500 19.500Z" fill="#fff" />
  </svg>
);

const PhoneIcon = () => (
  <svg width="18" height="32" viewBox="0 0 18 32" aria-hidden="true">
    <defs>
      <linearGradient id="phone" x1="0" y1="0" x2="1" y2="0.300">
        <stop offset="0" stopColor="#00f0ff" />
        <stop offset="1" stopColor="#2f98fb" />
      </linearGradient>
    </defs>
    <rect y="2" width="18" height="30" rx="2.500" fill="url(#phone)" />
    <path d="M6.500 4.500H11.500M4 30.500H14" stroke="#fff" strokeWidth="1" />
  </svg>
);

const ComputerIcon = () => (
  <svg width="30" height="22" viewBox="0 0 30 22" aria-hidden="true">
    <rect x="4" y="2" width="22" height="15" rx="1" fill="none" stroke="#a1a9bd" strokeWidth="2" />
    <path d="M0 18.500H10.500V19.500H19.500V18.500H30V19.500Q30 21.500 28 21.500H2Q0 21.500 0 19.500Z" fill="#a1a9bd" />
  </svg>
);

const DroneIcon = () => (
  <svg width="30" height="32" viewBox="0 0 30 32" aria-hidden="true" fill="none" stroke="#a1a9bd">
    <g transform="translate(0 2)">
      <path d="M6.500 6.500L12 12M23.500 6.500L18 12M6.500 23.500L12 18M23.500 23.500L18 18" strokeWidth="4" />
      <circle cx="15" cy="15" r="5" fill="#a1a9bd" stroke="none" />
      <circle cx="15" cy="15" r="2" stroke="#fff" strokeWidth="1" />
      <circle cx="6" cy="6" r="4.200" strokeWidth="1.800" />
      <circle cx="24" cy="6" r="4.200" strokeWidth="1.800" />
      <circle cx="6" cy="24" r="4.200" strokeWidth="1.800" />
      <circle cx="24" cy="24" r="4.200" strokeWidth="1.800" />
      <path d="M6.300 6.300h.1M23.700 6.300h.1M6.300 23.700h.1M23.700 23.700h.1" strokeWidth="5.500" strokeLinecap="round" />
    </g>
  </svg>
);

const GameIcon = () => (
  <svg width="28" height="20" viewBox="0 0 28 20" aria-hidden="true">
    <rect y="6" width="28" height="14" rx="5" fill="#a1a9bd" />
    <path d="M4.500 13H11M7.700 9.800V16.200" stroke="#fff" strokeWidth="1.500" />
    <circle cx="18.500" cy="11" r="1.200" fill="#fff" />
    <circle cx="21.500" cy="14.500" r="1.200" fill="#fff" />
  </svg>
);

const CarIcon = () => (
  <svg width="28" height="26" viewBox="0 -2 28 26" aria-hidden="true">
    <path
      fillRule="evenodd"
      fill="#a1a9bd"
      d="M8 0H20Q22.500 0 23.300 2.500L24.800 7H27Q28 7 28 8Q28 9 27 9H26.500L27 11V22Q27 23.500 25.500 23.500H23Q21.500 23.500 21.500 22V21H6.500V22Q6.500 23.500 5 23.500H2.500Q1 23.500 1 22V11L1.500 9H1Q0 9 0 8Q0 7 1 7H3.200L4.700 2.500Q5.500 0 8 0ZM8 2Q7 2 6.600 3L4.800 9.500H23.200L21.400 3Q21 2 20 2ZM6.500 13A2 2 0 1 0 6.510 17A2 2 0 1 0 6.500 13ZM21.500 13A2 2 0 1 0 21.510 17A2 2 0 1 0 21.500 13ZM11 14V16H17V14Z"
    />
  </svg>
);

const StarIcon = () => (
  <svg width="28" height="28" viewBox="0 0 28 28" aria-hidden="true">
    <path
      d="M14 1.500L18 9.500L26.700 10.800L20.400 17L21.900 25.700L14 21.600L6.100 25.700L7.600 17L1.300 10.800L10 9.500Z"
      fill="#a1a9bd"
      stroke="#a1a9bd"
      strokeWidth="2"
      strokeLinejoin="round"
    />
  </svg>
);

/* ---------- data ---------- */

const menus = ["File(F)", "VIP(V)", "Tool(T)", "Settings(S)", "PCB View settings(S)"];

const vipItems = [
  { label: "Cour...", icon: <CourseIcon /> },
  { label: "Phone", icon: <PhoneIcon />, active: true },
  { label: "Com...", icon: <ComputerIcon /> },
];

const customItems = [
  { label: "Drone", icon: <DroneIcon /> },
  { label: "Gam...", icon: <GameIcon /> },
  { label: "Car", icon: <CarIcon /> },
];

interface TreeRow {
  type: "group" | "sub" | "pcb" | "pdf";
  name: string;
  active?: boolean;
}

const rows: TreeRow[] = [
  { type: "group", name: "Realme V60 Pro、V70" },
  { type: "pcb", name: "Realme V60Pro、V70-2AB879-0 PCB" },
  { type: "pdf", name: "Realme V60Pro、V70-2AB879-0 image" },
  { type: "group", name: "Realme V60" },
  { type: "pcb", name: "Realme V60-2AB777-0 PCB layer.pcb" },
  { type: "pdf", name: "Realme V60-2AB777-0 image.pdf" },
  { type: "group", name: "Realme V50、V50S" },
  { type: "pcb", name: "Realme V50、Realme V50S-2AB706-0" },
  { type: "pdf", name: "Realme V50、Realme V50S-2AB706-0 " },
  { type: "pcb", name: "Realme V50、Realme V50S-shim PCB" },
  { type: "group", name: "Realme V30、V30T" },
  { type: "pdf", name: "realme V30 2AB464 image.pdf" },
  { type: "pdf", name: "realme V30 2AB464-1 Component exp" },
  { type: "pcb", name: "realme V30-2AB464-1 PCB layer.pcb" },
  { type: "pcb", name: "realme V30-2AB464-1 YiDianTong.pcb" },
  { type: "pdf", name: "realme V30-2AB464-1 image.pdf" },
  { type: "group", name: "Realme V25" },
  { type: "pdf", name: "realme V25 2AB256 Component exp" },
  { type: "pcb", name: "realme V25-2AB256 PCB layer.pcb" },
  { type: "pcb", name: "realme V25-2AB256 YiDianTong.pcb" },
  { type: "pdf", name: "realme V25-2AB256-image.pdf" },
  { type: "group", name: "Realme V23" },
  { type: "pdf", name: "realme V23-2AB416 Component exp" },
  { type: "pcb", name: "realme V23-2AB416 PCB layer.pcb" },
  { type: "pdf", name: "realme V23-2AB416-image.pdf" },
  { type: "group", name: "Realme V20" },
  { type: "pdf", name: "realme V20 2AB464-1 Component exp" },
  { type: "pcb", name: "realme V20-2AB464-1 PCB layer.pcb", active: true },
  { type: "pcb", name: "realme V20-2AB464-1 YiDianTong.pcb" },
  { type: "pdf", name: "realme V20-2AB464-1 image.pdf" },
  { type: "sub", name: "Repair Case" },
];

const layers = ["1", "2", "3", "4", "5", "6", "7", "8", "9", "10", "ALL"];

/* ---------- layout pieces ---------- */

const TitleBar = () => (
  <header className="flex h-10 shrink-0 items-center bg-[linear-gradient(100deg,#20a8fb_0%,#3077ff_12%,#3077ff_40%,#2f8dff_65%,#2a9ffe_100%)] pl-3 pr-[17px] text-white">
    <LogoIcon />
    <h1 className="ml-3.5">XZZ Schematics V4.77 [ VIP Due date: 2025-10-30 17:50:47 ]</h1>
    <div className="ml-auto flex items-center">
      <button type="button" aria-label="Toolbox" className="text-[#e5e537]">
        <svg width="18" height="18" viewBox="0 0 18 18" fill="none" stroke="currentColor" strokeWidth="1.500" aria-hidden="true">
          <rect x="1.500" y="4.500" width="15" height="12" rx="1.500" />
          <path d="M5.500 4.500V2.500Q5.500 1.500 6.500 1.500H11.500Q12.500 1.500 12.500 2.500V4.500M1.500 7.500H16.500M5 10.500H13" />
        </svg>
      </button>
      <span className="ml-2.5 h-5 w-px bg-white/40" />
      <button type="button" aria-label="Minimize" className="ml-3">
        <svg width="16" height="16" viewBox="0 0 16 16" aria-hidden="true"><path d="M0 8H16" stroke="#fff" strokeWidth="2" /></svg>
      </button>
      <button type="button" aria-label="Maximize" className="ml-3.5">
        <svg width="16" height="16" viewBox="0 0 16 16" aria-hidden="true"><rect x="1" y="1" width="14" height="14" rx="3" fill="none" stroke="#fff" strokeWidth="1.500" /></svg>
      </button>
      <button type="button" aria-label="Close" className="ml-3.5">
        <svg width="16" height="16" viewBox="0 0 16 16" aria-hidden="true"><path d="M0.500 0.500L15.500 15.500M15.500 0.500L0.500 15.500" stroke="#fff" strokeWidth="1.500" /></svg>
      </button>
    </div>
  </header>
);

const SideItem = ({ label, icon, active }: { label: string; icon: ReactNode; active?: boolean }) => (
  <button
    type="button"
    className={clsx("flex h-[70px] w-full flex-col items-center leading-5", active ? "text-[#3c9cf5]" : "text-[#6b7487]")}
  >
    <span className="flex h-9 items-center">{icon}</span>
    <span>{label}</span>
  </button>
);

const Sidebar = () => (
  <nav className="flex w-[74px] shrink-0 flex-col items-center bg-white pt-2.5 font-['Noto_Sans',sans-serif] text-sm">
    <div className="relative h-[226px] w-14 rounded-lg border-2 border-dashed border-[#2f9bf0] pt-4">
      <span className="absolute inset-x-0 -top-2.5 mx-auto w-6 bg-white text-center leading-4 text-[#3c9cf5]">VIP</span>
      {vipItems.map((item) => (
        <SideItem key={item.label} {...item} />
      ))}
    </div>
    <div className="relative mt-[34px] h-[226px] w-14 rounded-lg border-2 border-dashed border-[#5f6b82] pt-4">
      <span className="absolute inset-x-0 -top-3 bg-white text-center leading-5 text-[#6b7487]">Custom</span>
      {customItems.map((item) => (
        <SideItem key={item.label} {...item} />
      ))}
    </div>
    <div className="mt-[17px] w-full">
      <SideItem label="Favorites" icon={<StarIcon />} />
    </div>
  </nav>
);

const Tree = () => (
  <div className="flex min-w-0 flex-1">
    <div className="min-w-0 flex-1 overflow-hidden bg-[#f8f8f8] bg-[linear-gradient(90deg,#d9e3f2_0px,#eceff5_14px,#f8f8f8_34px)]">
      <ul className="-mt-3.5">
        {rows.map((row) => (
          <li key={row.name}>
            <button
              type="button"
              className={clsx(
                "flex h-6 w-full items-center text-left leading-6 whitespace-nowrap",
                row.type === "group" && "gap-1.5 pl-[61px]",
                row.type === "sub" && "gap-1.5 pl-[81px]",
                (row.type === "pcb" || row.type === "pdf") && "gap-1 pl-[83px]",
                row.active ? "text-[#5c9bff]" : "text-black"
              )}
            >
              {row.type === "pcb" ? <PcbIcon /> : row.type === "pdf" ? <PdfIcon /> : <CollapseIcon />}
              <span>{row.name}</span>
            </button>
          </li>
        ))}
      </ul>
    </div>
    <div className="relative w-3 shrink-0 bg-[#efefef]">
      <svg width="12" height="16" viewBox="0 0 12 16" fill="none" stroke="#555" aria-hidden="true">
        <path d="M2 11L6 7L10 11" />
      </svg>
      <div className="absolute left-px top-[300px] h-[50px] w-2.5 rounded-full bg-[#636363]" />
    </div>
  </div>
);

const SearchBar = () => (
  <div className="flex h-10 shrink-0 items-center gap-2.5 border-b border-[#dcdcdc] bg-white pl-[5px] pr-[5px]">
    <button type="button" className="h-[30px] w-[49px] shrink-0 rounded-[3px] border border-[#dcdcdc] text-black">
      Shrink
    </button>
    <label className="flex h-[30px] min-w-0 flex-1 items-center rounded-[3px] border border-[#dcdcdc] pl-2 pr-2">
      <input
        type="text"
        aria-label="Model number"
        placeholder="Please input the model number or PCB"
        className="min-w-0 flex-1 outline-none placeholder:text-[#c0c4cc]"
      />
      <svg width="16" height="16" viewBox="0 0 16 16" fill="none" stroke="#a0a5b0" strokeWidth="1.500" aria-hidden="true" className="shrink-0">
        <path d="M2 5L8 11L14 5" />
      </svg>
    </label>
    <button type="button" aria-label="Search" className="flex h-[30px] w-[49px] shrink-0 items-center justify-center rounded-[3px] bg-[#4f93ff] text-white">
      <Icon>
        <circle cx="10" cy="10" r="8.500" strokeWidth="1.800" />
        <path d="M16 16L18.500 18.500" strokeWidth="1.800" />
      </Icon>
    </button>
  </div>
);

const Handle = ({ side, className }: { side: "left" | "right"; className: string }) => (
  <div className={clsx("w-[9px] shrink-0", className)}>
    <button type="button" aria-label="Toggle panel" className="block">
      <svg width="9" height="114" viewBox="0 0 9 114" aria-hidden="true" className={side === "right" ? "-scale-x-100" : undefined}>
        <path d="M0 1L8.500 13V100L0 113Z" fill="#d9ebff" stroke="#9fd0fb" />
        <path d={side === "left" ? "M6 50L3 53L6 56" : "M3 55L6 58L3 61"} fill="none" stroke="#3c9cf5" />
      </svg>
    </button>
  </div>
);

const Divider = () => <span className="mx-px h-5 w-px shrink-0 bg-[#c4c4c4]" />;

const Tool = ({ label, on, children }: { label: string; on?: boolean; children: ReactNode }) => (
  <button
    type="button"
    aria-label={label}
    className={clsx("flex h-6 w-6 shrink-0 items-center justify-center text-[#333]", on && "bg-[#b5d1ff]")}
  >
    {children}
  </button>
);

const Toolbar = () => (
  <div className="flex h-[26px] shrink-0 items-center gap-0.5 bg-[#fafafa] pl-[5px] pr-1.5">
    <Tool label="Split view">
      <Icon><path d="M1 2H9V18H1ZM11 2H19V18H11Z" strokeWidth="1.200" /></Icon>
    </Tool>
    <Divider />
    <Tool label="Zoom in">
      <Icon><circle cx="9.500" cy="9.500" r="7" strokeWidth="2" /><path d="M15 15L18.500 18.500M6 9.500H13M9.500 6V13" strokeWidth="2.200" /></Icon>
    </Tool>
    <Tool label="Zoom out">
      <Icon><circle cx="9.500" cy="9.500" r="7.500" /><path d="M15 15L18.500 18.500M6 9.500H13" /></Icon>
    </Tool>
    <Divider />
    <Tool label="Fit">
      <Icon><circle cx="10" cy="10" r="5" /><path d="M2 6V2.500H6M14 2.500H18V6M18 14V17.500H14M6 17.500H2V14" strokeWidth="1.200" /></Icon>
    </Tool>
    <Divider />
    <Tool label="Rotate left">
      <Icon><rect x="1.500" y="7.500" width="15" height="11" rx="2" strokeWidth="1.700" /><path d="M7 3.500Q14 2 18.500 6.500M10.500 1L7 3.500L10.500 6" /></Icon>
    </Tool>
    <Tool label="Rotate right">
      <Icon><rect x="3.500" y="7.500" width="15" height="11" rx="2" /><path d="M13 3.500Q6 2 1.500 7.500M9.500 1L13 3.500L9.500 6" /></Icon>
    </Tool>
    <Divider />
    <Tool label="Paint">
      <Icon><path d="M3.500 2H16V6.500H3.500ZM16 4H18.500V9.500H10.500V12M1 4H3.500M9 12H12V18.500H9Z" strokeWidth="1.600" /></Icon>
    </Tool>
    <Divider />
    <Tool label="Mirror">
      <Icon><path d="M10 1.500V18.500M2 3L6.500 5.500V14.500L2 17ZM18 3L13.500 5.500V14.500L18 17Z" strokeWidth="1.500" /></Icon>
    </Tool>
    <Tool label="Lamp" on>
      <svg width="20" height="20" viewBox="0 0 20 20" fill="none" stroke="#ff1010" strokeWidth="1.300" aria-hidden="true">
        <path d="M10 0.500V3M2 12.500Q1 11 3 8.500Q5 3 10 3Q15 3 17 8.500Q19 11 18 12.500Q17 10.500 14 12.500Q12 10.500 10 12.500Q8 10.500 6 12.500Q3 10.500 2 12.500ZM6.500 12.500Q7 15 10 15Q13 15 13.500 12.500M2.500 15.500L4.500 14.500M17.500 15.500L15.500 14.500M10 16.500V19M6.500 16.500L5.500 19M13.500 16.500L14.500 19" />
      </svg>
    </Tool>
    <Tool label="3D">3D</Tool>
    <Tool label="Diode" on>
      <svg width="24" height="20" viewBox="0 0 24 20" aria-hidden="true">
        <path d="M0 10H24M19.500 4V16" stroke="#4d90fe" strokeWidth="1.300" />
        <path d="M7.500 4L19 10L7.500 16Z" fill="#4d90fe" />
      </svg>
    </Tool>
    <Tool label="Nets" on>
      <svg width="22" height="22" viewBox="0 0 22 22" fill="none" strokeWidth="1.200" aria-hidden="true">
        <rect x="1.500" y="1.500" width="19" height="19" rx="3" stroke="#444a55" />
        <path d="M8.500 8.500L19 18.500" stroke="#1eb54a" />
        <circle cx="7" cy="6.500" r="2" stroke="#1eb54a" />
        <path d="M14 6.500L15 10.500L19.500 13" stroke="#3d8bff" />
        <circle cx="13.500" cy="5" r="1.600" stroke="#3d8bff" />
        <path d="M6 12.500L10 14L11 17.500L14.500 19.500" stroke="#f03040" />
        <circle cx="4.500" cy="12" r="1.600" stroke="#f03040" />
      </svg>
    </Tool>
    <Tool label="Curve">
      <Icon><path d="M3 15.500Q4 5 15 4.500" strokeWidth="1.600" /><circle cx="3" cy="17" r="1.700" /><circle cx="17" cy="4" r="1.700" /></Icon>
    </Tool>
    <Divider />
    <Tool label="Mouse">
      <Icon><rect x="4" y="2" width="12" height="16.500" rx="5" strokeWidth="1.600" /><path d="M4 9H8.500M11.500 9H16M10 2V5M8.500 5H11.500V11H8.500Z" strokeWidth="1.200" /></Icon>
    </Tool>
    <Divider />
    <button type="button" className="h-[22px] w-[109px] shrink-0 border border-[#f01818] text-center leading-5 text-[#222]">
      [ColorScheme]
    </button>
    <Divider />
    <Tool label="Show">
      <svg width="20" height="20" viewBox="0 0 20 20" fill="none" stroke="#4383e6" strokeWidth="1.400" aria-hidden="true">
        <path d="M1 10Q5 3.500 10 3.500Q15 3.500 19 10Q15 16.500 10 16.500Q5 16.500 1 10Z" />
        <circle cx="10" cy="10" r="4" />
        <path d="M8.500 10.500Q8.500 8.500 10.500 8.500" />
      </svg>
    </Tool>
    <button type="button" aria-label="List" className="ml-auto text-[#666]">
      <svg width="22" height="18" viewBox="0 0 22 18" fill="none" stroke="currentColor" strokeWidth="1.500" aria-hidden="true">
        <path d="M1 1H21V17H1ZM7 1V17M11 5.500H17M11 9H17M11 12.500H17" />
      </svg>
    </button>
  </div>
);

const Tabs = () => (
  <div className="flex h-[34px] shrink-0 items-center gap-[5px] border-b border-[#dcdcdc] bg-[#fafafa] pl-2 pr-[11px]">
    <button type="button" className="flex h-6 items-center gap-1 rounded-[3px] border border-[#777] px-1.5 text-[#8a8a8a]">
      <svg width="18" height="18" viewBox="0 0 18 18" fill="none" stroke="#111" strokeWidth="1.600" aria-hidden="true">
        <path d="M0.800 9.500L9 1.500L17.200 9.500M3.500 8V17H14.500V8M7 17V11.500H11V17" />
      </svg>
      Member Center
    </button>
    <button
      type="button"
      className="h-6 rounded-[3px] border border-black px-2.5 font-['Noto_Sans',sans-serif] leading-5 font-bold text-black"
    >
      realme V20-2AB464-1 PCB layer.pcb
    </button>
    <button type="button" aria-label="Close all tabs" className="ml-auto">
      <svg width="18" height="18" viewBox="0 0 18 18" fill="none" aria-hidden="true">
        <path d="M1 14V2Q1 1 2 1H15" stroke="#777" strokeWidth="2" />
        <rect x="4" y="4" width="14" height="14" rx="2" fill="#777" />
        <path d="M8.500 8.500L13.500 13.500M13.500 8.500L8.500 13.500" stroke="#fff" strokeWidth="1.500" />
      </svg>
    </button>
  </div>
);

const LayerPanel = () => (
  <div className="absolute left-0 top-0 flex w-[35px] flex-col items-center gap-1.5 rounded-[3px] border border-[#d4d4d4] bg-white py-[5px]">
    {layers.map((layer) => (
      <button
        key={layer}
        type="button"
        className={clsx(
          "flex h-6 w-6 items-center justify-center rounded-[2px] border border-[#888] font-['Liberation_Mono',monospace] text-sm leading-5 text-[#c4c4c4]",
          layer === "1" ? "bg-[#004700]" : layer === "10" ? "bg-[#007f3f]" : "bg-[#515151]"
        )}
      >
        {layer}
      </button>
    ))}
  </div>
);

const App: React.FC = () => {
  return (
    <div className="flex h-screen flex-col overflow-hidden bg-white font-['Roboto','Noto_Sans_CJK_SC',sans-serif] text-[15px] leading-6">
      <TitleBar />
      <nav className="flex h-8 shrink-0 items-center gap-3.5 border-b border-[#dadada] bg-[#efefef] px-[18px] text-black">
        {menus.map((menu) => (
          <button key={menu} type="button">{menu}</button>
        ))}
      </nav>
      <main className="flex min-h-0 flex-1">
        <section className="flex w-[431px] shrink-0 flex-col border-r border-[#d6d6d6]">
          <SearchBar />
          <div className="flex min-h-0 flex-1">
            <Sidebar />
            <Tree />
          </div>
        </section>
        <Handle side="left" className="bg-[#fbfffb] pt-[336px]" />
        <section className="flex min-w-0 flex-1 flex-col border-l border-[#d6d6d6]">
          <Tabs />
          <div className="flex min-h-0 flex-1">
            <div className="flex min-w-0 flex-1 flex-col border-r border-[#d6d6d6]">
              <Toolbar />
              <div className="relative min-h-0 flex-1 bg-white">
                <BoardView />
                <LayerPanel />
              </div>
            </div>
            <Handle side="right" className="bg-[#fafafa] pt-[323px]" />
          </div>
        </section>
      </main>
      <footer className="flex h-5 shrink-0 items-center justify-center bg-[#0490d9] font-['DejaVu_Sans_Mono',monospace] leading-5 text-white">
        XZZ Schematics https://www.xzztools.com
      </footer>
    </div>
  );
};

export default App;
